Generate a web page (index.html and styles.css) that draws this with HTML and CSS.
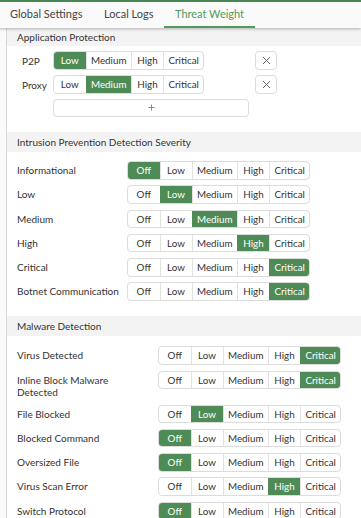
FILE: index.html
```html
<!DOCTYPE html>
<html>
<head>
<meta charset="utf-8">
<link rel="stylesheet" href="styles.css">
</head>
<body>
<div class="topline"></div>
<nav class="tabs">
  <div class="tab">Global Settings</div>
  <div class="tab">Local Logs</div>
  <div class="tab active">Threat Weight</div>
</nav>
<main class="panel">
  <section class="section">
    <div class="section-header first">Application Protection</div>
    <div class="app-body">
      <div class="app-row">
        <div class="app-label">P2P</div>
        <div class="app-group">
          <div class="seg-group">
            <span class="seg active">Low</span><span class="seg">Medium</span><span class="seg">High</span><span class="seg">Critical</span>
          </div>
        </div>
        <button class="icon-btn" type="button"><svg width="9" height="9" viewBox="0 0 9 9"><path d="M1 1L8 8M8 1L1 8" stroke="#666" stroke-width="1" fill="none"/></svg></button>
      </div>
      <div class="app-row">
        <div class="app-label">Proxy</div>
        <div class="app-group">
          <div class="seg-group">
            <span class="seg">Low</span><span class="seg active">Medium</span><span class="seg">High</span><span class="seg">Critical</span>
          </div>
        </div>
        <button class="icon-btn" type="button"><svg width="9" height="9" viewBox="0 0 9 9"><path d="M1 1L8 8M8 1L1 8" stroke="#666" stroke-width="1" fill="none"/></svg></button>
      </div>
      <div class="app-row">
        <div class="app-label"></div>
        <button class="add-btn" type="button"><svg width="7" height="7" viewBox="0 0 7 7"><path d="M3.5 0.5V6.5M0.5 3.5H6.5" stroke="#888" stroke-width="1" fill="none"/></svg></button>
      </div>
    </div>
  </section>

  <section class="section">
    <div class="section-header">Intrusion Prevention Detection Severity</div>
    <div class="grid-body ips">
      <div class="label">Informational</div>
      <div class="seg-group"><span class="seg active">Off</span><span class="seg">Low</span><span class="seg">Medium</span><span class="seg">High</span><span class="seg">Critical</span></div>
      <div class="label">Low</div>
      <div class="seg-group"><span class="seg">Off</span><span class="seg active">Low</span><span class="seg">Medium</span><span class="seg">High</span><span class="seg">Critical</span></div>
      <div class="label">Medium</div>
      <div class="seg-group"><span class="seg">Off</span><span class="seg">Low</span><span class="seg active">Medium</span><span class="seg">High</span><span class="seg">Critical</span></div>
      <div class="label">High</div>
      <div class="seg-group"><span class="seg">Off</span><span class="seg">Low</span><span class="seg">Medium</span><span class="seg active">High</span><span class="seg">Critical</span></div>
      <div class="label">Critical</div>
      <div class="seg-group"><span class="seg">Off</span><span class="seg">Low</span><span class="seg">Medium</span><span class="seg">High</span><span class="seg active">Critical</span></div>
      <div class="label">Botnet Communication</div>
      <div class="seg-group"><span class="seg">Off</span><span class="seg">Low</span><span class="seg">Medium</span><span class="seg">High</span><span class="seg active">Critical</span></div>
    </div>
  </section>

  <section class="section">
    <div class="section-header">Malware Detection</div>
    <div class="grid-body mal">
      <div class="label">Virus Detected</div>
      <div class="seg-group"><span class="seg">Off</span><span class="seg">Low</span><span class="seg">Medium</span><span class="seg">High</span><span class="seg active">Critical</span></div>
      <div class="label">Inline Block Malware Detected</div>
      <div class="seg-group"><span class="seg">Off</span><span class="seg">Low</span><span class="seg">Medium</span><span class="seg">High</span><span class="seg active">Critical</span></div>
      <div class="label">File Blocked</div>
      <div class="seg-group"><span class="seg">Off</span><span class="seg active">Low</span><span class="seg">Medium</span><span class="seg">High</span><span class="seg">Critical</span></div>
      <div class="label">Blocked Command</div>
      <div class="seg-group"><span class="seg active">Off</span><span class="seg">Low</span><span class="seg">Medium</span><span class="seg">High</span><span class="seg">Critical</span></div>
      <div class="label">Oversized File</div>
      <div class="seg-group"><span class="seg active">Off</span><span class="seg">Low</span><span class="seg">Medium</span><span class="seg">High</span><span class="seg">Critical</span></div>
      <div class="label">Virus Scan Error</div>
      <div class="seg-group"><span class="seg">Off</span><span class="seg">Low</span><span class="seg">Medium</span><span class="seg active">High</span><span class="seg">Critical</span></div>
      <div class="label">Switch Protocol</div>
      <div class="seg-group"><span class="seg active">Off</span><span class="seg">Low</span><span class="seg">Medium</span><span class="seg">High</span><span class="seg">Critical</span></div>
    </div>
  </section>
</main>
</body>
</html>
```

FILE: styles.css
```css
* { box-sizing: border-box; }
html, body { margin: 0; padding: 0; background: #fafafa; overflow: hidden; }
body {
  font-family: Lato, "Open Sans", "Liberation Sans", sans-serif;
  color: #333;
  width: 361px;
  height: 518px;
}
.topline { height: 2px; background: #4a8a55; }
.tabs {
  display: flex;
  height: 26px;
  background: #fafafa;
  box-shadow: 0 1px 3px rgba(0,0,0,0.28);
  position: relative;
  z-index: 2;
  margin-left: -0.75px;
}
.tab {
  padding: 0 10.75px;
  font-size: 11px;
  line-height: 24px;
  color: #444;
  border-bottom: 2px solid transparent;
}
.tab.active { color: #4f9a5d; border-bottom-color: #4f9a5d; }

.panel {
  margin-left: 6px;
  border-left: 1px solid #d8d8d8;
  background: #fff;
  min-height: 490px;
}
.section-header {
  height: 20px;
  line-height: 20px;
  background: #f3f3f3;
  padding-left: 10px;
  font-size: 10px;
  color: #333;
}
.section-header.first { height: 18px; line-height: 18px; }

.app-body {
  padding: 5px 0 15px 15px;
  display: flex;
  flex-direction: column;
  gap: 5px;
}
.app-row { display: flex; align-items: center; }
.app-label { width: 31px; font-size: 10px; line-height: 12px; }
.app-group { width: 196px; display: flex; }
.icon-btn {
  margin-left: 6px;
  width: 22px;
  height: 19px;
  border: 1px solid #dcdcdc;
  border-radius: 4px;
  background: #fff;
  padding: 0;
  display: flex;
  align-items: center;
  justify-content: center;
}
.add-btn {
  width: 196px;
  height: 17.5px;
  border: 1px solid #dcdcdc;
  border-radius: 4px;
  background: #fff;
  padding: 0;
  display: flex;
  align-items: center;
  justify-content: center;
}

.grid-body {
  display: grid;
  row-gap: 5.8px;
  justify-items: start;
  align-items: start;
  padding: 9.5px 0 15.5px 10px;
}
.grid-body.ips { grid-template-columns: 110px auto; }
.grid-body.mal { grid-template-columns: 131px auto; column-gap: 10px; padding-top: 10px; }
.label {
  font-size: 10px;
  line-height: 12.5px;
  padding-top: 3px;
  color: #333;
}

.seg-group {
  display: flex;
  height: 18.5px;
  border: 1px solid #dcdcdc;
  border-radius: 4px;
  overflow: hidden;
  background: #fff;
}
.seg {
  min-width: 32px;
  padding: 0 4.5px;
  text-align: center;
  font-size: 9.8px;
  line-height: 16.5px;
  color: #333;
  border-left: 1px solid #e2e2e2;
}
.seg:first-child { border-left: none; min-width: 31.5px; }
.seg.active { background: #4e8b57; color: #fff; border-left-color: #4e8b57; }
```
